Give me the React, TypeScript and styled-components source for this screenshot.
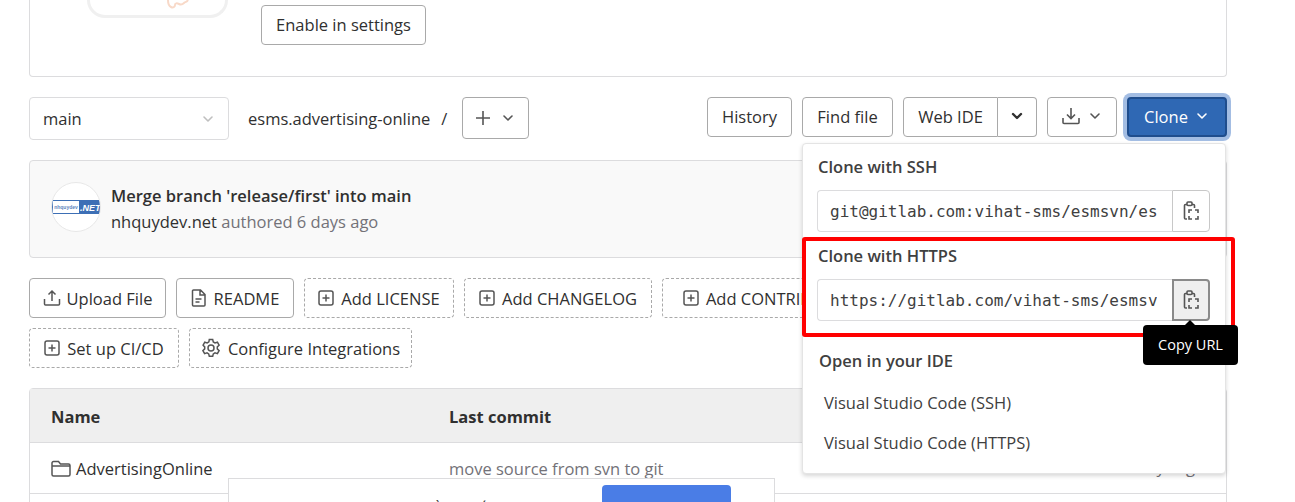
import {FC} from 'react'
import styled, {createGlobalStyle} from 'styled-components'

const GlobalStyle = createGlobalStyle`
  html, body {
    margin: 0;
    height: 502px;
    overflow: hidden;
    background: #fff;
    font-family: "Open Sans", "Noto Sans", "Liberation Sans", sans-serif;
    font-size: 16.5px;
    color: #303030;
  }
`

const Page = styled.div`
  position: relative;
  width: 1295px;
  height: 502px;
  overflow: hidden;
  box-sizing: border-box;
  padding-left: 29px;
`

const Content = styled.div`
  width: 1198px;
  display: flex;
  flex-direction: column;
`

const Banner = styled.section`
  height: 77px;
  box-sizing: border-box;
  border: 1px solid #dcdcde;
  border-top: none;
  border-radius: 0 0 4px 4px;
  display: flex;
  padding-left: 57px;
  gap: 33px;
`

const BannerArt = styled.div`
  width: 141px;
  height: 18px;
  box-sizing: border-box;
  border: 3px solid #f0f0f0;
  border-top: none;
  border-radius: 0 0 26px 26px;
  padding-left: 40px;
  display: flex;
  justify-content: center;
  align-items: flex-start;
`

const Button = styled.button<{dashed?: boolean; w?: number; gap?: number}>`
  height: 40px;
  ${({w}) => w ? `width: ${w}px;` : ''}
  box-sizing: border-box;
  background: #fff;
  border: 1px ${({dashed}) => dashed ? 'dashed' : 'solid'} #a9a9a9;
  border-radius: 4px;
  padding: 0;
  font: inherit;
  color: #303030;
  display: inline-flex;
  align-items: center;
  justify-content: center;
  gap: ${({gap}) => gap ?? 7}px;
  flex-shrink: 0;
  white-space: nowrap;
`

const EnableButton = styled(Button)`
  margin-top: 5px;
  padding-bottom: 2px;
`

const PlusButton = styled(Button)`
  height: 42px;
`

const Toolbar = styled.div`
  margin-top: 20px;
  height: 43px;
  display: flex;
  align-items: flex-start;
`

const BranchSelect = styled.div`
  width: 200px;
  height: 43px;
  box-sizing: border-box;
  border: 1px solid #dcdcde;
  border-radius: 4px;
  padding: 0 12px 0 13px;
  display: flex;
  align-items: center;
  justify-content: space-between;
  color: #303030;
`

const PathText = styled.span`
  margin-left: 19px;
  line-height: 43px;
  white-space: nowrap;
`

const PathSlash = styled.span`
  margin: 0 15px 0 11px;
  line-height: 43px;
`

const ToolbarRight = styled.div`
  margin-left: auto;
  display: flex;
  gap: 10px;
  ${Button} {
    padding-bottom: 2px;
  }
`

const SplitGroup = styled.div`
  display: flex;
  ${Button}:first-child {
    border-radius: 4px 0 0 4px;
  }
  ${Button}:last-child {
    border-radius: 0 4px 4px 0;
    border-left: none;
  }
`

const CloneButton = styled(Button)`
  background: #2f68b4;
  color: #fff;
  border: 2px solid #1f4d8d;
  box-shadow: 0 0 0 4px #a3bde3;
`

const CommitBox = styled.section`
  margin-top: 20px;
  height: 98px;
  box-sizing: border-box;
  background: #f9f9f9;
  border: 1px solid #dcdcde;
  border-radius: 4px;
  padding: 21px;
  display: flex;
  gap: 10px;
`

const Avatar = styled.div`
  width: 50px;
  height: 50px;
  box-sizing: border-box;
  background: #fff;
  border: 1px solid #e8e8e8;
  border-radius: 50%;
  display: flex;
  align-items: center;
  justify-content: center;
  overflow: hidden;
  flex-shrink: 0;
`

const CommitText = styled.div`
  padding-top: 3px;
  display: flex;
  flex-direction: column;
  gap: 4px;
  line-height: 22px;
`

const CommitTitle = styled.div`
  font-weight: 600;
  color: #303030;
`

const CommitMeta = styled.div`
  color: #737278;
  b { font-weight: 400; color: #303030; }
`

const Actions = styled.div`
  margin-top: 20px;
  width: 860px;
  height: 90px;
  display: flex;
  flex-wrap: wrap;
  align-content: flex-start;
  gap: 10px;
`

const Table = styled.section`
  margin-top: 20px;
  box-sizing: border-box;
  border: 1px solid #dcdcde;
  border-radius: 4px 4px 0 0;
`

const Row = styled.div<{head?: boolean}>`
  height: ${({head}) => head ? 54 : 51}px;
  box-sizing: border-box;
  background: ${({head}) => head ? '#efefef' : '#fff'};
  border-bottom: 1px solid #dcdcde;
  padding: 1px 21px 0;
  display: grid;
  grid-template-columns: 398px 1fr auto;
  align-items: center;
  font-weight: ${({head}) => head ? 700 : 400};
`

const FileName = styled.div`
  display: flex;
  align-items: center;
  gap: 5px;
`

const Muted = styled.span`
  color: #737278;
`

const UpdatedAt = styled(Muted)`
  padding-bottom: 4px;
`

const Popover = styled.div`
  position: absolute;
  left: 802px;
  top: 143px;
  width: 424px;
  height: 331px;
  box-sizing: border-box;
  background: #fff;
  border: 1px solid #e4e4e4;
  border-radius: 4px;
  box-shadow: 0 2px 4px rgba(0, 0, 0, .16);
  padding: 10px 15px 0 14px;
`

const PopoverHead = styled.div<{indent?: number}>`
  height: 25px;
  line-height: 25px;
  font-weight: 600;
  color: #404040;
  margin-left: ${({indent}) => indent ?? 1}px;
`

const CopyRow = styled.div`
  margin-top: 11px;
  height: 42px;
  width: 393px;
  display: flex;
`

const CopyField = styled.div`
  flex: 1;
  min-width: 0;
  box-sizing: border-box;
  border: 1px solid #dcdcde;
  border-radius: 4px 0 0 4px;
  border-right: none;
  padding: 0 15px 0 12px;
  line-height: 42px;
  font-family: "DejaVu Sans Mono", "Liberation Mono", monospace;
  font-size: 16px;
  color: #404040;
`

const CopyText = styled.div`
  white-space: nowrap;
  overflow: hidden;
`

const CopyButton = styled.div<{active?: boolean}>`
  width: 38px;
  box-sizing: border-box;
  border: ${({active}) => active ? '2px solid #8a8a8a' : '1px solid #c8c8c8'};
  border-radius: 0 4px 4px 0;
  background: ${({active}) => active ? '#efefef' : '#fff'};
  display: flex;
  align-items: center;
  justify-content: center;
`

const Section = styled.div<{top: number}>`
  margin-top: ${({top}) => top}px;
`

const IdeLink = styled.div`
  margin-left: 7px;
  height: 40px;
  line-height: 40px;
  color: #404040;
`

const Highlight = styled.div`
  position: absolute;
  left: 802px;
  top: 237px;
  width: 433px;
  height: 100px;
  box-sizing: border-box;
  border: 4px solid #f00;
  border-radius: 3px;
`

const Tooltip = styled.div`
  position: absolute;
  left: 1143px;
  top: 325px;
  width: 95px;
  height: 40px;
  box-sizing: border-box;
  background: #000;
  color: #fff;
  border-radius: 4px;
  font-size: 14.5px;
  text-align: center;
  line-height: 40px;
  &::before {
    content: '';
    position: absolute;
    top: -5px;
    left: 42px;
    border: 5px solid transparent;
    border-top: none;
    border-bottom-color: #000;
  }
`

const Notice = styled.div`
  position: absolute;
  left: 228px;
  top: 478px;
  width: 547px;
  height: 60px;
  box-sizing: border-box;
  background: #fff;
  border: 1px solid #dcdcde;
  padding: 6px 0 0 10px;
  display: flex;
  gap: 10px;
`

const NoticeText = styled.div`
  width: 353px;
  margin-top: 11px;
  white-space: nowrap;
  overflow: hidden;
`

const NoticeButton = styled.div`
  width: 129px;
  height: 44px;
  background: #4a7de6;
  border-radius: 4px;
  color: #fff;
  text-align: center;
  font-weight: 600;
  line-height: 45px;
`

const NoticeMark = styled.div`
  margin: 10px 0 0 8px;
`

const Chevron: FC<{size?: number; color?: string; bold?: boolean}> = ({size = 16, color = 'currentColor', bold}) => (
  <svg width={size} height={size} viewBox="0 0 16 16" fill="none">
    <path d="M4 6l4 4 4-4" stroke={color} strokeWidth={bold ? 2.4 : 1.6} strokeLinecap="round" strokeLinejoin="round" />
  </svg>
)

const AddIcon = () => (
  <svg width="16" height="16" viewBox="0 0 16 16" fill="none" stroke="#555" strokeWidth="1.5">
    <rect x="1" y="1" width="14" height="14" rx="2" />
    <path d="M8 4.500v7M4.500 8h7" />
  </svg>
)

const CopyIcon = () => (
  <svg width="16" height="20" viewBox="0 0 16 20" fill="none" stroke="#555" strokeWidth="1.6">
    <rect x="4" y="1" width="5" height="3.500" rx="1" />
    <path d="M4 3.500H2.500a1 1 0 0 0-1 1V17a1 1 0 0 0 1 1H4" />
    <path d="M9 3.500h1.500a1 1 0 0 1 1 1V7" />
    <path d="M6 12V9h3M12 9h3v3M15 15v3h-3M9 18H6v-3" />
  </svg>
)

const Logo = () => (
  <svg width="48" height="14" viewBox="0 0 48 14">
    <rect width="48" height="14" fill="#3d6fb5" />
    <rect x="1" y="1" width="26" height="12" fill="#fff" />
    <text x="14" y="9" fontSize="5" fontWeight="700" textAnchor="middle" fill="#5d86c0" fontFamily="Liberation Sans, sans-serif">nhquydev</text>
    <text x="28" y="10.500" fontSize="9" fontWeight="700" fontStyle="italic" fill="#fff" fontFamily="Liberation Sans, sans-serif">.NET</text>
  </svg>
)

export default function App() {
  return (
    <>
      <GlobalStyle />
      <Page>
        <Content>
          <Banner>
            <BannerArt>
              <svg width="22" height="9" viewBox="0 0 22 9" fill="none" stroke="#f8d9c8" strokeWidth="2">
                <path d="M1 0c0 3 1 6 3 7s4 0 4-2 2-2 4-1 4 0 5-1 3-1 4-3" />
              </svg>
            </BannerArt>
            <EnableButton w={165}>Enable in settings</EnableButton>
          </Banner>

          <Toolbar>
            <BranchSelect>main<Chevron color="#bfbfbf" /></BranchSelect>
            <PathText>esms.advertising-online</PathText>
            <PathSlash>/</PathSlash>
            <PlusButton w={67} gap={9}>
              <svg width="16" height="16" viewBox="0 0 16 16" fill="none" stroke="#555" strokeWidth="1.6">
                <path d="M8 1v14M1 8h14" />
              </svg>
              <Chevron color="#555" />
            </PlusButton>
            <ToolbarRight>
              <Button w={85}>History</Button>
              <Button w={91}>Find file</Button>
              <SplitGroup>
                <Button w={95}>Web IDE</Button>
                <Button w={39}><Chevron bold /></Button>
              </SplitGroup>
              <Button w={70} gap={6}>
                <svg width="20" height="18" viewBox="0 0 20 18" fill="none" stroke="#555" strokeWidth="1.6">
                  <path d="M10 1v10M6 7.500l4 4 4-4M2 11v4.500a1 1 0 0 0 1 1h14a1 1 0 0 0 1-1V11" />
                </svg>
                <Chevron color="#555" />
              </Button>
              <CloneButton w={100} gap={6}>Clone<Chevron /></CloneButton>
            </ToolbarRight>
          </Toolbar>

          <CommitBox>
            <Avatar><Logo /></Avatar>
            <CommitText>
              <CommitTitle>Merge branch 'release/first' into main</CommitTitle>
              <CommitMeta><b>nhquydev.net</b> authored 6 days ago</CommitMeta>
            </CommitText>
          </CommitBox>

          <Actions>
            <Button w={137} gap={6}>
              <svg width="18" height="18" viewBox="0 0 18 18" fill="none" stroke="#555" strokeWidth="1.5">
                <path d="M9 12V2M5.500 5.500L9 2l3.500 3.500M1.500 10v5a1 1 0 0 0 1 1h13a1 1 0 0 0 1-1v-5" />
              </svg>
              Upload File
            </Button>
            <Button w={118}>
              <svg width="16" height="18" viewBox="0 0 16 18" fill="none" stroke="#555" strokeWidth="1.5">
                <path d="M2.500 1h7L14 5.500v10.500a1 1 0 0 1-1 1H2.500a1 1 0 0 1-1-1V2a1 1 0 0 1 1-1zM9 1v5h5M4.500 10h6M4.500 13h4" />
              </svg>
              README
            </Button>
            <Button dashed w={150}><AddIcon />Add LICENSE</Button>
            <Button dashed w={188}><AddIcon />Add CHANGELOG</Button>
            <Button dashed w={220}><AddIcon />Add CONTRIBUTING</Button>
            <Button dashed w={150}><AddIcon />Set up CI/CD</Button>
            <Button dashed w={223}>
              <svg width="20" height="20" viewBox="0 0 20 20" fill="none" stroke="#555" strokeWidth="1.5">
                <circle cx="10" cy="10" r="3" />
                <path d="M8.300 1.500h3.400l.6 2.400 1.700 1 2.400-.7 1.700 3-1.800 1.700v2l1.800 1.700-1.700 3-2.400-.7-1.700 1-.6 2.400H8.300l-.6-2.400-1.700-1-2.400.7-1.700-3 1.800-1.700v-2L2.100 7.200l1.700-3 2.400.7 1.700-1z" />
              </svg>
              Configure Integrations
            </Button>
          </Actions>

          <Table>
            <Row head><span>Name</span><span>Last commit</span><span>Last update</span></Row>
            <Row>
              <FileName>
                <svg width="20" height="17" viewBox="0 0 20 17" fill="none" stroke="#555" strokeWidth="1.5">
                  <path d="M1 3a1.500 1.500 0 0 1 1.500-1.500h5L9.500 4h8A1.500 1.500 0 0 1 19 5.500v9a1.500 1.500 0 0 1-1.500 1.500h-15A1.500 1.500 0 0 1 1 14.500zM1 6h18" />
                </svg>
                AdvertisingOnline
              </FileName>
              <Muted>move source from svn to git</Muted>
              <UpdatedAt>6 days ago</UpdatedAt>
            </Row>
            <Row />
          </Table>
        </Content>

        <Popover>
          <PopoverHead>Clone with SSH</PopoverHead>
          <CopyRow>
            <CopyField><CopyText>git@gitlab.com:vihat-sms/esmsvn/esms.advertising-online.git</CopyText></CopyField>
            <CopyButton><CopyIcon /></CopyButton>
          </CopyRow>
          <Section top={11}>
            <PopoverHead>Clone with HTTPS</PopoverHead>
            <CopyRow>
              <CopyField><CopyText>https://gitlab.com/vihat-sms/esmsvn/esms.advertising-online.git</CopyText></CopyField>
              <CopyButton active><CopyIcon /></CopyButton>
            </CopyRow>
          </Section>
          <Section top={27}>
            <PopoverHead indent={2}>Open in your IDE</PopoverHead>
            <Section top={10}>
              <IdeLink>Visual Studio Code (SSH)</IdeLink>
              <IdeLink>Visual Studio Code (HTTPS)</IdeLink>
            </Section>
          </Section>
        </Popover>
        <Highlight />
        <Tooltip>Copy URL</Tooltip>

        <Notice>
          <NoticeText>Hãy xem trang web này bằng tiếng Việt</NoticeText>
          <NoticeButton>Đăng ký</NoticeButton>
          <NoticeMark>
            <svg width="8" height="12" viewBox="0 0 8 12" fill="none" strokeWidth="1.2">
              <path d="M1 11l3-3" stroke="#7a6fe0" />
              <path d="M4 5l3-3" stroke="#d06fd0" />
            </svg>
          </NoticeMark>
        </Notice>
      </Page>
    </>
  )
}
